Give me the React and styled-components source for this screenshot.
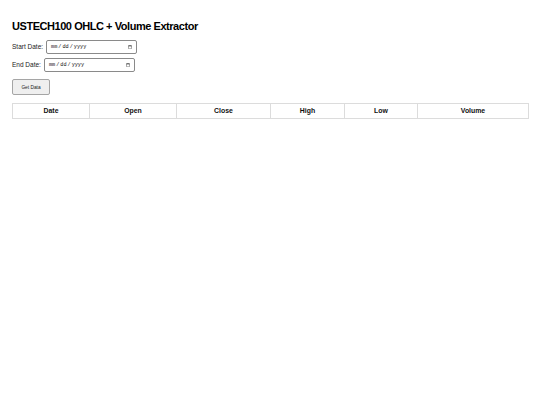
import React from 'react';
import styled, { createGlobalStyle } from 'styled-components';

const GlobalStyle = createGlobalStyle`
  html, body {
    margin: 0;
    padding: 0;
    background: #fff;
  }
  body {
    font-family: "Liberation Sans", Arial, sans-serif;
    color: #111;
  }
`;

const Page = styled.div`
  padding: 20px 12px;
`;

const Title = styled.h2`
  margin: 0 0 7px;
  font-size: 11px;
  line-height: 13px;
  font-weight: 700;
  letter-spacing: -0.45px;
  color: #000;
`;

const Field = styled.div`
  display: flex;
  align-items: center;
  gap: 3px;
  margin-bottom: 4px;
`;

const Label = styled.label`
  font-size: 6.5px;
  line-height: 14px;
  color: #222;
  white-space: nowrap;
`;

const DateInput = styled.input`
  box-sizing: border-box;
  width: 91px;
  height: 14px;
  margin: 0;
  padding: 0 3px;
  border: 1px solid #8a8a8a;
  border-radius: 2px;
  font-family: "Liberation Mono", "DejaVu Sans Mono", monospace;
  font-size: 5.2px;
  color: #111;
  background: #fff;
  &::-webkit-calendar-picker-indicator {
    width: 4px;
    height: 4px;
    padding: 0;
    margin: 0 1px 0 0;
  }
  &::-webkit-datetime-edit {
    padding: 0;
  }
`;

const Button = styled.button`
  box-sizing: border-box;
  display: block;
  width: 38px;
  height: 16px;
  margin: 7px 0 8px;
  padding: 0;
  border: 1px solid #a5a5a5;
  border-radius: 2px;
  background: #efefef;
  font-family: "Liberation Sans", Arial, sans-serif;
  font-size: 4.8px;
  color: #222;
  cursor: pointer;
`;

const Table = styled.table`
  width: 516px;
  border-collapse: collapse;
  table-layout: fixed;
`;

const Th = styled.th`
  width: ${(p) => p.w}px;
  box-sizing: border-box;
  border: 1px solid #dcdcdc;
  padding: 3px 4px;
  height: 15px;
  font-size: 6.9px;
  line-height: 8px;
  font-weight: 700;
  text-align: center;
  color: #111;
`;

const columns = [
  { name: 'Date', w: 77 },
  { name: 'Open', w: 87 },
  { name: 'Close', w: 94 },
  { name: 'High', w: 74 },
  { name: 'Low', w: 73 },
  { name: 'Volume', w: 111 },
];

const App = () => {
  return (
    <>
      <GlobalStyle />
      <Page>
        <Title>USTECH100 OHLC + Volume Extractor</Title>
        <Field>
          <Label htmlFor="start">Start Date:</Label>
          <DateInput id="start" type="date" />
        </Field>
        <Field>
          <Label htmlFor="end">End Date:</Label>
          <DateInput id="end" type="date" />
        </Field>
        <Button>Get Data</Button>
        <Table>
          <thead>
            <tr>
              {columns.map((c) => (
                <Th key={c.name} w={c.w}>{c.name}</Th>
              ))}
            </tr>
          </thead>
          <tbody></tbody>
        </Table>
      </Page>
    </>
  );
};

export default App;
